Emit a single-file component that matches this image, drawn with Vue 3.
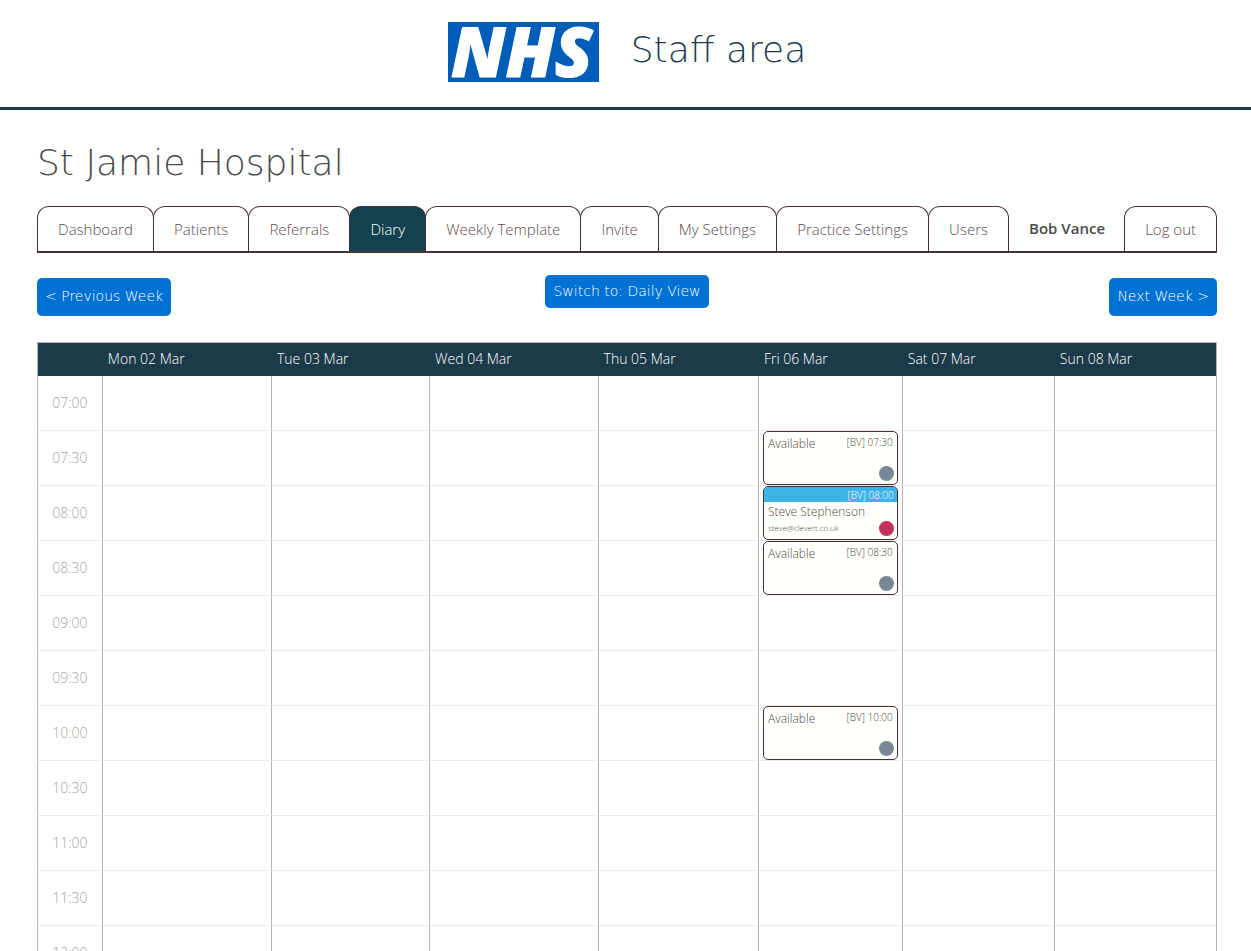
<template>
  <div class="page">
    <header class="banner">
      <svg class="logo" viewBox="0 0 151 60" role="img" aria-label="NHS">
        <rect width="151" height="60" fill="#005eb8" />
        <text x="3" y="55" class="logo-text">NHS</text>
      </svg>
      <span class="banner-title">Staff area</span>
    </header>

    <main class="content">
      <h1 class="hospital">St Jamie Hospital</h1>

      <nav class="tabs">
        <template v-for="tab in tabs" :key="tab.label">
          <span v-if="tab.user" class="user">{{ tab.label }}</span>
          <a v-else href="#" class="tab" :class="{ active: tab.active }">{{ tab.label }}</a>
        </template>
      </nav>

      <div class="toolbar">
        <button type="button" class="btn btn-week">&lt; Previous Week</button>
        <button type="button" class="btn btn-view">Switch to: Daily View</button>
        <button type="button" class="btn btn-week btn-next">Next Week &gt;</button>
      </div>

      <table class="diary">
        <colgroup>
          <col class="col-time" />
          <col v-for="day in days" :key="day.label" :style="{ width: day.width }" />
        </colgroup>
        <thead>
          <tr>
            <td></td>
            <th v-for="day in days" :key="day.label" scope="col">{{ day.label }}</th>
          </tr>
        </thead>
        <tbody>
          <tr v-for="time in times" :key="time">
            <th scope="row">{{ time }}</th>
            <td v-for="day in days" :key="day.label">
              <div
                v-if="slotFor(day, time)"
                class="slot"
                :class="{ booked: slotFor(day, time).email }"
              >
                <span class="slot-time">[BV] {{ time }}</span>
                <span class="slot-name">{{ slotFor(day, time).name }}</span>
                <span v-if="slotFor(day, time).email" class="slot-email">
                  {{ slotFor(day, time).email }}
                </span>
                <span class="dot"></span>
              </div>
            </td>
          </tr>
        </tbody>
      </table>
    </main>
  </div>
</template>

<script setup>
const tabs = [
  { label: 'Dashboard' },
  { label: 'Patients' },
  { label: 'Referrals' },
  { label: 'Diary', active: true },
  { label: 'Weekly Template' },
  { label: 'Invite' },
  { label: 'My Settings' },
  { label: 'Practice Settings' },
  { label: 'Users' },
  { label: 'Bob Vance', user: true },
  { label: 'Log out' },
];

const days = [
  { label: 'Mon 02 Mar', width: '14.35%' },
  { label: 'Tue 03 Mar', width: '13.4%' },
  { label: 'Wed 04 Mar', width: '14.3%' },
  { label: 'Thu 05 Mar', width: '13.6%' },
  { label: 'Fri 06 Mar', width: '12.2%' },
  { label: 'Sat 07 Mar', width: '12.9%' },
  { label: 'Sun 08 Mar', width: '13.75%' },
];

const times = [
  '07:00',
  '07:30',
  '08:00',
  '08:30',
  '09:00',
  '09:30',
  '10:00',
  '10:30',
  '11:00',
  '11:30',
  '12:00',
];

const slots = {
  'Fri 06 Mar': {
    '07:30': { name: 'Available' },
    '08:00': { name: 'Steve Stephenson', email: 'steve@clevert.co.uk' },
    '08:30': { name: 'Available' },
    '10:00': { name: 'Available' },
  },
};

const slotFor = (day, time) => slots[day.label]?.[time];
</script>

<style>
body {
  background: #fff;
}
</style>

<style scoped>
.page {
  color: #4a4a4a;
  font-family: 'Open Sans', 'Noto Sans', sans-serif;
  font-size: 15px;
  font-weight: 300;
}

.banner {
  display: flex;
  justify-content: center;
  gap: 32px;
  padding: 22px 34px 25px 37px;
  border-bottom: 3px solid #1b3b4b;
}

.logo {
  display: block;
  width: 151px;
  height: 60px;
  overflow: visible;
}

.logo-text {
  fill: #fff;
  stroke: #fff;
  stroke-width: 1px;
  font-size: 69px;
  font-style: italic;
  font-weight: 800;
}

.banner-title,
.hospital {
  font-family: 'DejaVu Sans', sans-serif;
  font-size: 36px;
  font-weight: 200;
  line-height: 56px;
}

.banner-title {
  color: #1b3b4b;
}

.content {
  padding: 25px 34px 0 37px;
}

.hospital {
  margin: 0 0 15px;
}

.tabs {
  display: flex;
  border-bottom: 2px solid #463137;
}

.tab,
.user {
  flex: 1 1 auto;
  box-sizing: border-box;
  height: 45px;
  line-height: 44px;
  text-align: center;
  white-space: nowrap;
  padding: 0 20px;
}

.tab {
  margin-left: -1px;
  border: 1px solid #463137;
  border-bottom: 0;
  border-radius: 12px 12px 0 0;
  color: #5a4a4f;
  text-decoration: none;
}

.tab:first-child {
  margin-left: 0;
}

.tab.active {
  background: #13414f;
  color: #fff;
}

.user {
  font-weight: 600;
}

.toolbar {
  display: grid;
  grid-template-columns: 1fr auto 1fr;
  align-items: start;
  justify-items: start;
  padding: 22px 0 26px;
}

.btn {
  border: 0;
  border-radius: 5px;
  background: #0072d4;
  color: #fff;
  font-family: 'DejaVu Sans', sans-serif;
  font-size: 14px;
  font-weight: 200;
  padding: 0 8px 2px;
}

.btn-week {
  height: 38px;
  margin-top: 3px;
}

.btn-view {
  height: 33px;
}

.btn-next {
  justify-self: end;
}

.diary {
  width: 100%;
  table-layout: fixed;
  border-collapse: separate;
  border-spacing: 0;
  border: solid #b5b5b5;
  border-width: 1px 1px 0 0;
  font-size: 14px;
}

.col-time {
  width: 5.5%;
}

.diary th {
  font-weight: 300;
}

.diary thead th,
.diary thead td {
  box-sizing: border-box;
  height: 33px;
  padding: 0 6px 2px;
  border: 0;
  background: #1b3b4b;
  color: #fff;
  text-align: left;
}

.diary thead td {
  border-left: 1px solid #b5b5b5;
}

.diary tbody th,
.diary tbody td {
  box-sizing: border-box;
  height: 55px;
  padding: 0 4px;
  border-left: 1px solid #b5b5b5;
  border-bottom: 1px solid #ececec;
}

.diary tbody th {
  color: #a5a5a5;
  text-align: center;
  padding-bottom: 2px;
}

.slot {
  position: relative;
  box-sizing: border-box;
  height: 54px;
  border: 1px solid #463137;
  border-radius: 5px;
  background: #fffffb;
  overflow: hidden;
  font-size: 12px;
  line-height: 16px;
  padding: 4px;
}

.slot-time {
  float: right;
  font-size: 10px;
  line-height: 12px;
}

.slot-name {
  display: block;
}

.slot-email {
  display: block;
  font-size: 8px;
}

.booked {
  padding-top: 0;
}

.booked .slot-time {
  float: none;
  display: block;
  margin: 0 -4px 2px;
  padding: 1px 3px 0;
  background: #3cb4e7;
  color: #fff;
  line-height: 14px;
  text-align: right;
}

.dot {
  position: absolute;
  right: 3px;
  bottom: 3px;
  width: 15px;
  height: 15px;
  border-radius: 50%;
  background: #778793;
}

.booked .dot {
  background: #c5305c;
}
</style>
